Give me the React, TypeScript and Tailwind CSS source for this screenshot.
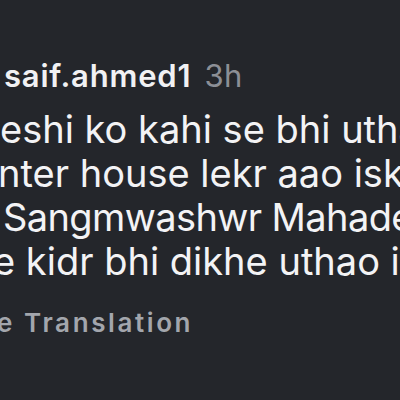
export default function App() {
  const lines = [
    { text: "eshi ko kahi se bhi uthao", pad: "pl-[0px] tracking-[0px]" },
    { text: "nter house lekr aao isko", pad: "-ml-[2px] tracking-[0px]" },
    { text: "Sangmwashwr Mahadev", pad: "pl-[3px] tracking-[-0.6px]" },
    { text: "e kidr bhi dikhe uthao isko", pad: "-ml-[7px] tracking-[0px]" },
  ];

  return (
    <div className="w-[400px] h-[400px] overflow-hidden bg-[#24262b] font-['Inter','Liberation_Sans',sans-serif]">
      <div className="flex flex-col pt-[57px]">
        <div className="flex items-baseline gap-[13px] pl-[4px] whitespace-nowrap leading-[38px]">
          <span className="text-[31px] font-semibold text-[#f1f1f3] tracking-[0.8px]">saif.ahmed1</span>
          <span className="text-[31px] text-[#8c8f96] tracking-[0.5px]">3h</span>
        </div>
        <div className="flex flex-col mt-[12px]">
          {lines.map((line, index) => (
            <div
              key={index}
              className={`${line.pad} whitespace-nowrap text-[38px] leading-[44px] text-[#f3f3f5]`}
            >
              {line.text}
            </div>
          ))}
        </div>
        <div className="mt-[24px] -ml-[3px] whitespace-nowrap text-[26px] font-semibold leading-[32px] tracking-[2.6px] text-[#a3a6ad]">
          e Translation
        </div>
      </div>
    </div>
  );
}
